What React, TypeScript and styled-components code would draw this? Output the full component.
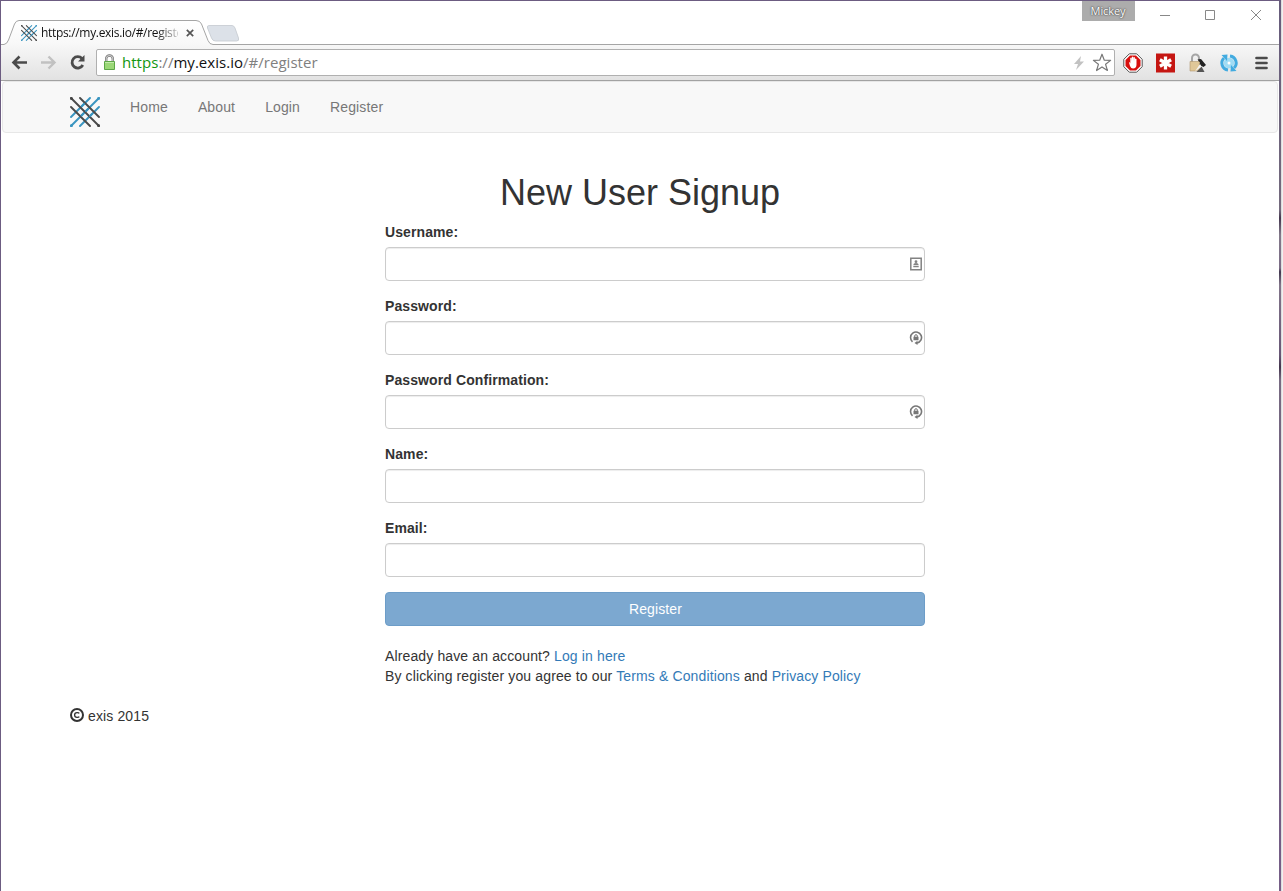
import React from 'react';
import styled, { createGlobalStyle } from 'styled-components';

const GlobalStyle = createGlobalStyle`
  * { box-sizing: border-box; }
  body {
    margin: 0;
    background: #fff;
    color: #333;
    font: 14px/20px "Liberation Sans", Arial, sans-serif;
    letter-spacing: 0.13px;
    overflow: hidden;
  }
`;

const Desktop = styled.div`
  display: flex;
  width: 1283px;
  height: 891px;
`;

const BrowserWindow = styled.div`
  flex: 1;
  display: flex;
  flex-direction: column;
  border-left: 1px solid #6c5c81;
  border-top: 1px solid #6c5c81;
  background: #fff;
`;

const WindowEdge = styled.div`
  width: 2px;
  background: linear-gradient(#675c7c 0, #746a7d 210px, #45374f 218px, #83798a 235px, #7b6c86 268px, #42384f 272px, #82758a 285px, #685776 355px, #44364e 367px, #786b82 380px, #67557b 600px, #765e87 100%);
`;

const BackdropSliver = styled.div`
  width: 2px;
  background: #dedede;
  border-right: 1px solid #f0f0f0;
`;

const TabStrip = styled.div`
  position: relative;
  display: flex;
  height: 44px;
  flex: none;
`;

const TabOutline = styled.svg`
  position: absolute;
  left: 0;
  top: 0;
`;

const TabContent = styled.div`
  position: relative;
  display: flex;
  align-items: center;
  width: 206px;
  height: 24px;
  margin-top: 20px;
  padding-left: 20px;
`;

const TabTitle = styled.span`
  width: 137px;
  margin-left: 4px;
  overflow: hidden;
  white-space: nowrap;
  color: #111;
  font: 12px/16px "Open Sans", "Noto Sans", sans-serif;
  letter-spacing: -0.32px;
  mask-image: linear-gradient(to right, #000 115px, transparent 143px);
`;

const TabClose = styled.svg`
  margin-left: 8px;
`;

const WindowControls = styled.div`
  display: flex;
  margin-left: auto;
  margin-right: 1px;
  position: relative;
`;

const ProfileBadge = styled.div`
  width: 53px;
  height: 20px;
  margin-right: 7px;
  background: #acacac;
  color: #fff;
  text-align: center;
  font: 11px/20px "Open Sans", sans-serif;
  letter-spacing: -0.1px;
  text-shadow: 0 0 2px #333, 0 0 1px #555;
`;

const ControlIcon = styled.svg`
  width: 45.5px;
  height: 29px;
`;

const Toolbar = styled.div`
  display: flex;
  align-items: center;
  height: 36px;
  flex: none;
  padding-left: 10px;
  background: linear-gradient(#f7f7f7, #e2e2e2);
  border-bottom: 1px solid #a2a2a2;
`;

const NavIcon = styled.svg`
  width: 17px;
  height: 17px;
  margin-right: 12px;
  flex: none;
`;

const AddressBar = styled.div`
  display: flex;
  align-items: center;
  width: 1019px;
  height: 27px;
  margin-left: -2px;
  padding: 0 2px 0 6px;
  border: 1px solid #b0b0b0;
  border-radius: 2px;
  background: #fff;
`;

const Url = styled.span`
  flex: 1;
  margin-left: 6px;
  padding-bottom: 2px;
  color: #808080;
  font: 15px/22px "Open Sans", "Noto Sans", sans-serif;
  letter-spacing: 0.03px;
`;

const Scheme = styled.span`
  color: #119611;
`;

const Host = styled.span`
  color: #111;
`;

const Extensions = styled.div`
  display: flex;
  align-items: center;
  gap: 12px;
  margin-left: 8px;
`;

const Page = styled.div`
  flex: 1;
  padding: 0 1px;
`;

const Navbar = styled.nav`
  display: flex;
  height: 52px;
  padding: 15px 0 0 67px;
  background: #f8f8f8;
  border: 1px solid #e7e7e7;
  border-radius: 4px;
`;

const NavLinks = styled.div`
  display: flex;
  gap: 30px;
  margin-left: 30px;
`;

const NavLink = styled.a`
  color: #777;
  line-height: 20px;
`;

const Signup = styled.form`
  width: 540px;
  margin: 40px 0 0 383px;
`;

const Title = styled.h1`
  width: 510px;
  margin: 0 0 9px;
  text-align: center;
  font-size: 36px;
  font-weight: 400;
  line-height: 40px;
  letter-spacing: 0;
`;

const Field = styled.div`
  margin-bottom: 15px;
`;

const Label = styled.label`
  display: block;
  margin-bottom: 5px;
  font-weight: 700;
  letter-spacing: 0.1px;
`;

const InputBox = styled.div`
  display: flex;
  align-items: center;
  justify-content: flex-end;
  height: 34px;
  padding-right: 1px;
  border: 1px solid #ccc;
  border-radius: 4px;
  box-shadow: inset 0 1px 1px rgba(0, 0, 0, 0.075);
`;

const RegisterButton = styled.button`
  display: block;
  width: 100%;
  height: 34px;
  padding: 0 0 0 1px;
  border: 1px solid #6d9dc8;
  border-radius: 4px;
  background: #7ca8d0;
  color: #fff;
  font: 14px/20px "Liberation Sans", Arial, sans-serif;
  letter-spacing: 0.13px;
`;

const Notes = styled.div`
  margin-top: 20px;
`;

const Link = styled.a`
  color: #337ab7;
`;

const Footer = styled.footer`
  display: flex;
  align-items: flex-start;
  gap: 4px;
  margin: 20px 0 0 68px;
`;

const CopyrightIcon = styled.svg`
  margin-top: 2px;
`;

function ExisMark({ size }: { size: number }) {
  return (
    <svg width={size} height={size} viewBox="0 0 30 30" fill="none" strokeWidth="1.9" strokeLinecap="round">
      <path stroke="#3a95c0" d="M1 29 29 1M1 20 20 1M10 29 29 10" />
      <path stroke="#4a4a4a" d="M1 1 29 29M10 1 29 20M1 10 20 29" />
      <path stroke="#3a95c0" d="m16 14 2-2M11.500 18.500l2-2M12 9l2-2M20 19l2-2" />
      <g fill="#444"><circle cx="1.500" cy="1.500" r="1.500" /><circle cx="28.500" cy="28.500" r="1.500" /></g>
      <g fill="#3a95c0"><circle cx="28.500" cy="1.500" r="1.500" /><circle cx="1.500" cy="28.500" r="1.500" /></g>
    </svg>
  );
}

function ContactIcon() {
  return (
    <svg width="14" height="14" viewBox="0 0 14 14" fill="#828282">
      <path fill="none" stroke="#828282" strokeWidth="1.500" d="M1.800 1.300h10.400v11.400H1.800z" />
      <circle cx="7" cy="4.700" r="1.400" />
      <path d="M4.300 8q0-1.900 2.700-1.900T9.700 8zM4.300 8.800h5.400v1.500H4.300z" />
    </svg>
  );
}

function PasswordIcon() {
  return (
    <svg width="14" height="14" viewBox="0 0 14 14">
      <path fill="none" stroke="#777" strokeWidth="1.600" d="M3.500 10.800A5.500 5.500 0 1 1 8 12" />
      <path fill="#777" d="m5.500 12 3-2.200v4.200zM4.500 5.800h5v3.500h-5z" />
      <path fill="none" stroke="#777" d="M5.700 6V5a1.300 1.300 0 0 1 2.600 0v1" />
    </svg>
  );
}

const fields: { label: string; icon?: React.ReactNode }[] = [
  { label: 'Username:', icon: <ContactIcon /> },
  { label: 'Password:', icon: <PasswordIcon /> },
  { label: 'Password Confirmation:', icon: <PasswordIcon /> },
  { label: 'Name:' },
  { label: 'Email:' },
];

function Tabs() {
  return (
    <TabStrip>
      <TabOutline width="1278" height="44">
        <defs>
          <linearGradient id="tab" x1="0" y1="0" x2="0" y2="1">
            <stop stopColor="#fff" />
            <stop offset="1" stopColor="#f7f7f7" />
          </linearGradient>
        </defs>
        <path fill="url(#tab)" stroke="#a5a5a5" d="M-1 43.500H3Q6 43 7.500 39L13.500 23Q15 19.500 18 19.500H195Q199 19.500 200.500 23L207 39.500Q208.500 43.500 212 43.500H1279V46H-1z" />
        <path fill="#dce1e8" stroke="#c4c9cf" strokeWidth=".8" d="M208 24.500h23q2 0 3 2.500l3.500 10q1 3-2 3h-21q-3 0-4-3L206.500 27q-.7-2.500 1.500-2.500z" />
      </TabOutline>
      <TabContent>
        <ExisMark size={16} />
        <TabTitle>https://my.exis.io/#/register</TabTitle>
        <TabClose width="8" height="8" viewBox="0 0 8 8" stroke="#555" strokeWidth="1.700"><path d="m.8.8 6.400 6.400m0-6.400L.8 7.200" /></TabClose>
      </TabContent>
      <WindowControls>
        <ProfileBadge>Mickey</ProfileBadge>
        <ControlIcon viewBox="0 0 45.500 29" stroke="#888"><path d="M18 14.500h10" /></ControlIcon>
        <ControlIcon viewBox="0 0 45.500 29" stroke="#888" fill="none"><path d="M18.500 9.500h9v9h-9z" /></ControlIcon>
        <ControlIcon viewBox="0 0 45.500 29" stroke="#888"><path d="m18 9 10 10m0-10L18 19" /></ControlIcon>
      </WindowControls>
    </TabStrip>
  );
}

function BrowserToolbar() {
  return (
    <Toolbar>
      <NavIcon viewBox="0 0 17 17" fill="none" stroke="#4b4b4b" strokeWidth="2.600"><path d="M16 8.500H3M8.500 2.500l-6 6 6 6" /></NavIcon>
      <NavIcon viewBox="0 0 17 17" fill="none" stroke="#c1c1c1" strokeWidth="2.400"><path d="M1 8.500h13M8.500 2.500l6 6-6 6" /></NavIcon>
      <NavIcon viewBox="0 0 17 17"><path fill="none" stroke="#4b4b4b" strokeWidth="2.800" d="M13 4.500A5.700 5.700 0 1 0 13.800 11" /><path fill="#4b4b4b" d="M15.500 1v6.500H9z" /></NavIcon>
      <AddressBar>
        <svg width="13" height="17" viewBox="0 0 13 17">
          <path fill="none" stroke="#777" strokeWidth="2.400" d="M3.200 8V4.800a3.300 3.300 0 0 1 6.600 0V8" />
          <path fill="none" stroke="#eee" strokeWidth=".8" d="M3.200 8V4.800a3.300 3.300 0 0 1 6.600 0V8" />
          <path fill="#9bd877" stroke="#5da747" d="M1.500 7.500h10v8h-10z" />
          <path stroke="#c3ecac" d="M2 8.500h9" />
        </svg>
        <Url><Scheme>https</Scheme>://<Host>my.exis.io</Host>/#/register</Url>
        <svg width="12" height="16" viewBox="0 0 12 16"><path fill="#c2c2c2" d="M7 1 0 9h4l-2 6 8-8.500H6z" /></svg>
        <svg width="20" height="19" viewBox="0 0 20 19" style={{ marginLeft: 6 }}><path fill="#fff" stroke="#777" strokeWidth="1.200" strokeLinejoin="round" d="m10 1.200 2.300 6 6.300.2-5 3.900 1.800 6.200-5.400-3.600-5.400 3.600 1.800-6.200-5-3.900 6.300-.2z" /></svg>
      </AddressBar>
      <Extensions>
        <svg width="20" height="20" viewBox="0 0 20 20">
          <path fill="#fff" stroke="#555" d="M6.300.8h7.400l5.500 5.500v7.400l-5.500 5.500H6.300L.8 13.700V6.300z" />
          <path fill="#d8100e" d="M7 2.500h6L17.500 7v6L13 17.500H7L2.500 13V7z" />
          <path fill="#fff" d="M6 9.500q1-.8 1.300 1V5q1-1 1.400 0l.2 3V4q.8-1 1.400 0l.2 4V4.500q.8-1 1.400 0l.1 4V6q.8-1 1.500 0v5.500q0 4-3.500 4-2 0-3-2.500z" />
        </svg>
        <svg width="20" height="20" viewBox="0 0 20 20">
          <path fill="#c51612" d="M1 .500h19v19H1z" />
          <path fill="none" stroke="#fff" strokeWidth="3.300" d="M10.500 3.500v13M4.900 6.800l11.200 6.400M4.900 13.200l11.200-6.400" />
        </svg>
        <svg width="20" height="20" viewBox="0 0 20 20">
          <path fill="none" stroke="#a5a5a5" strokeWidth="2" d="M5 10V5a3.500 3.500 0 0 1 7 0v5" />
          <path fill="#dfc798" stroke="#ae966b" strokeWidth=".6" d="M3 8.500h10v9.500H3z" />
          <path fill="#222" d="m10.500 6.500 3.500-.5 5 6-2.500 2-4-2 .5-2.500z" />
          <path fill="#555" d="m14.500 13.500-5 5.500h8z" />
          <path fill="#f4f4f4" d="m13 11-5 7.500 6.500-5z" />
        </svg>
        <svg width="20" height="20" viewBox="0 0 20 20">
          <circle cx="10" cy="10" r="5.200" fill="#9fdcf5" />
          <path fill="none" stroke="#42abe0" strokeWidth="3" d="M9 17A7 7 0 0 1 5 5M11 3A7 7 0 0 1 15 15" />
          <path fill="#42abe0" d="m2.500 2 6-.5L8 8zM17.500 18l-6 .5.500-6.500z" />
          <circle cx="10" cy="10" r="1.500" fill="#fff" />
        </svg>
        <svg width="20" height="20" viewBox="0 0 20 20" stroke="#4a4a4a" strokeWidth="2.700" strokeLinecap="round"><path d="M5.500 5h10M5.500 10h10M5.500 15h10" /></svg>
      </Extensions>
    </Toolbar>
  );
}

export default function App() {
  return (
    <Desktop>
      <GlobalStyle />
      <BrowserWindow>
        <Tabs />
        <BrowserToolbar />
        <Page>
          <Navbar>
            <ExisMark size={30} />
            <NavLinks>
              {['Home', 'About', 'Login', 'Register'].map((name) => <NavLink key={name}>{name}</NavLink>)}
            </NavLinks>
          </Navbar>
          <Signup>
            <Title>New User Signup</Title>
            {fields.map(({ label, icon }) => (
              <Field key={label}>
                <Label>{label}</Label>
                <InputBox>{icon}</InputBox>
              </Field>
            ))}
            <RegisterButton type="button">Register</RegisterButton>
            <Notes>
              Already have an account? <Link>Log in here</Link><br />
              By clicking register you agree to our <Link>Terms &amp; Conditions</Link> and <Link>Privacy Policy</Link>
            </Notes>
          </Signup>
          <Footer>
            <CopyrightIcon width="14" height="14" viewBox="0 0 14 14" fill="none" stroke="#333">
              <circle cx="7" cy="7" r="6" strokeWidth="2" />
              <path strokeWidth="1.300" d="M9.300 5.400Q8.800 4.600 7.500 4.600H7a2.400 2.400 0 0 0 0 4.800h.5q1.300 0 1.800-.8" />
            </CopyrightIcon>
            <span>exis 2015</span>
          </Footer>
        </Page>
      </BrowserWindow>
      <WindowEdge />
      <BackdropSliver />
    </Desktop>
  );
}
